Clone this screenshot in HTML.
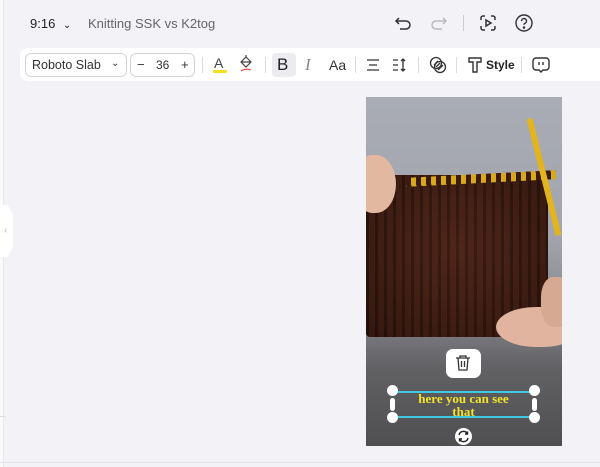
<!DOCTYPE html>
<html><head><meta charset="utf-8"><style>
*{margin:0;padding:0;box-sizing:border-box}
body{width:600px;height:467px;background:#f2f2f7;font-family:"Liberation Sans",sans-serif;position:relative;overflow:hidden;color:#333}
.abs{position:absolute}
.tb{left:20px;top:48px;width:580px;height:33px;background:#fff;border-radius:8px 0 0 8px}
.box{border:1px solid #d4d4d8;border-radius:6px;background:#fff;height:24px;top:53px}
.sep{width:1px;height:16px;background:#ddd;top:57px}
.t{font-size:13px}
</style></head><body>
<div class="abs" style="left:0;top:0;width:4px;height:467px;background:#fafafa;border-right:1px solid #e8e8ec"></div>
<div class="abs" style="left:0;top:205px;width:13px;height:52px;background:#fff;border-radius:0 4px 4px 0;clip-path:polygon(0 0,60% 0,100% 20%,100% 80%,60% 100%,0 100%)"></div>
<div class="abs" style="left:4px;top:225px;font-size:10px;color:#bbb">‹</div>
<div class="abs" style="left:0;top:416px;width:6px;height:1px;background:#ddd"></div>
<div class="abs" style="left:0;top:462px;width:600px;height:1px;background:#e4e4e8"></div>

<div class="abs t" style="left:30px;top:16px;color:#222">9:16 <span style="font-size:10px;margin-left:4px">⌄</span></div>
<div class="abs t" style="left:88px;top:16px;color:#666">Knitting SSK vs K2tog</div>
<svg class="abs" style="left:394px;top:14px" width="20" height="18" viewBox="0 0 20 18" fill="none" stroke="#333" stroke-width="1.5"><path d="M5 4 L2 7 L5 10 M2 7 H12 a4 4 0 0 1 0 8 H6"/></svg>
<svg class="abs" style="left:428px;top:14px" width="20" height="18" viewBox="0 0 20 18" fill="none" stroke="#bbb" stroke-width="1.5"><path d="M15 4 L18 7 L15 10 M18 7 H8 a4 4 0 0 0 0 8 H14"/></svg>
<div class="abs" style="left:463px;top:15px;width:1px;height:16px;background:#ccc"></div>
<svg class="abs" style="left:479px;top:14px" width="18" height="18" viewBox="0 0 18 18" fill="none" stroke="#333" stroke-width="1.5"><path d="M2 6V4a2 2 0 0 1 2-2h2M12 2h2a2 2 0 0 1 2 2v2M16 12v2a2 2 0 0 1-2 2h-2M6 16H4a2 2 0 0 1-2-2v-2"/><path d="M7 6 L12 9 L7 12Z"/></svg>
<svg class="abs" style="left:514px;top:13px" width="20" height="20" viewBox="0 0 20 20" fill="none" stroke="#333" stroke-width="1.4"><circle cx="10" cy="10" r="8"/><path d="M7.5 8a2.5 2.5 0 1 1 3.5 2.3c-.7.3-1 .8-1 1.5"/><circle cx="10" cy="14.5" r=".6" fill="#333"/></svg>

<div class="abs tb"></div>
<div class="abs box" style="left:25px;width:102px"></div>
<div class="abs t" style="left:32px;top:58px;font-size:12.5px;color:#333">Roboto Slab</div>
<div class="abs" style="left:111px;top:58px;font-size:10px">⌄</div>
<div class="abs box" style="left:130px;width:65px"></div>
<div class="abs t" style="left:137px;top:57px">−</div>
<div class="abs t" style="left:156px;top:58px;font-size:12px">36</div>
<div class="abs t" style="left:181px;top:57px">+</div>
<div class="abs sep" style="left:202px"></div>
<div class="abs" style="left:214px;top:55px;font-size:14px;color:#444">A</div>
<div class="abs" style="left:213px;top:70px;width:14px;height:3px;background:#f5e020;border-radius:1px"></div>
<svg class="abs" style="left:239px;top:55px" width="14" height="20" viewBox="0 0 14 20" fill="none" stroke="#444" stroke-width="1.2"><path d="M7 2 L12 7 L7 12 L2 7Z M2 7H12 M7 0V3"/><path d="M2 16 Q7 13 12 15" stroke="#e44" /></svg>
<div class="abs sep" style="left:265px"></div>
<div class="abs" style="left:272px;top:53px;width:24px;height:24px;background:#ececf0;border-radius:4px"></div>
<div class="abs" style="left:277px;top:55px;font-size:17px;color:#222">B</div>
<div class="abs" style="left:305px;top:55px;font-size:17px;color:#888;font-style:italic;font-family:'Liberation Serif',serif">I</div>
<div class="abs" style="left:329px;top:57px;font-size:14px;color:#333">Aa</div>
<div class="abs sep" style="left:355px"></div>
<svg class="abs" style="left:366px;top:58px" width="14" height="14" viewBox="0 0 14 14" stroke="#333" stroke-width="1.3"><path d="M1 2H13M3 7H11M1 12H13"/></svg>
<svg class="abs" style="left:392px;top:57px" width="16" height="16" viewBox="0 0 16 16" stroke="#333" stroke-width="1.3" fill="none"><path d="M1 3H6M1 8H6M1 13H6M11 2V14M9 4L11 2L13 4M9 12L11 14L13 12"/></svg>
<div class="abs sep" style="left:418px"></div>
<svg class="abs" style="left:429px;top:56px" width="18" height="18" viewBox="0 0 18 18" stroke="#333" stroke-width="1.3" fill="none"><circle cx="7" cy="7" r="5.5"/><circle cx="11" cy="11" r="5.5"/><path d="M7 11L11 7M9 14L14 9M5 9L9 5"/></svg>
<div class="abs sep" style="left:456px"></div>
<svg class="abs" style="left:468px;top:57px" width="14" height="16" viewBox="0 0 14 16" stroke="#333" stroke-width="1.4" fill="none"><path d="M1 1H13V5H9V15H5V5H1Z"/></svg>
<div class="abs" style="left:486px;top:58px;font-size:12px;font-weight:bold;color:#222">Style</div>
<div class="abs sep" style="left:521px"></div>
<svg class="abs" style="left:532px;top:56px" width="18" height="18" viewBox="0 0 18 18" stroke="#333" stroke-width="1.4" fill="none"><path d="M4 2H14a3 3 0 0 1 3 3V11a3 3 0 0 1-3 3H11L9 16L7 14H4a3 3 0 0 1-3-3V5a3 3 0 0 1 3-3Z M7 6V9M11 6V9"/></svg>

<!-- video -->
<div class="abs" style="left:366px;top:97px;width:196px;height:349px;overflow:hidden;background:linear-gradient(180deg,#a9acb4 0%,#a2a5ad 40%,#85868c 62%,#616164 78%,#4f4f52 100%)">
  <div class="abs" style="left:0;top:78px;width:182px;height:162px;background:repeating-linear-gradient(90deg,rgba(0,0,0,.18) 0 3px,rgba(120,60,40,.12) 3px 9px),radial-gradient(ellipse at 50% 45%,#4a2318,#34180f 70%,#28120c);border-radius:6px 10px 4px 4px"></div>
  <div class="abs" style="left:40px;top:77px;width:150px;height:9px;background:repeating-linear-gradient(90deg,#3a1a10 0 5px,#d8a91a 5px 10px);transform:rotate(-3deg)"></div>
  <div class="abs" style="left:175px;top:20px;width:6px;height:120px;background:#e2b41d;transform:rotate(-14deg)"></div>
  <div class="abs" style="left:-10px;top:58px;width:40px;height:58px;background:#e3b8a0;border-radius:40% 50% 50% 40%"></div>
  <div class="abs" style="left:130px;top:210px;width:80px;height:40px;background:#e0b49e;border-radius:50% 40% 40% 50%"></div>
  <div class="abs" style="left:175px;top:180px;width:30px;height:50px;background:#d6aa92;border-radius:40%"></div>
</div>

<div class="abs" style="left:446px;top:349px;width:35px;height:29px;background:#fff;border-radius:7px"></div>
<svg class="abs" style="left:455px;top:355px" width="16" height="17" viewBox="0 0 16 17" stroke="#333" stroke-width="1.3" fill="none"><path d="M1 3H15M5 3V1H11V3M3 3L4 15H12L13 3M6.5 6V12M9.5 6V12"/></svg>
<div class="abs" style="left:392px;top:391px;width:143px;height:27px;border-top:2px solid #3ec9e0;border-bottom:2px solid #3ec9e0"></div>
<div class="abs" style="left:392px;top:392px;width:143px;text-align:center;color:#f2e22a;font-family:'Liberation Serif',serif;font-weight:bold;font-size:13px;line-height:13px">here you can see<br>that</div>
<div class="abs" style="left:387px;top:385px;width:11px;height:11px;border-radius:50%;background:#fff"></div>
<div class="abs" style="left:529px;top:385px;width:11px;height:11px;border-radius:50%;background:#fff"></div>
<div class="abs" style="left:387px;top:412px;width:11px;height:11px;border-radius:50%;background:#fff"></div>
<div class="abs" style="left:529px;top:412px;width:11px;height:11px;border-radius:50%;background:#fff"></div>
<div class="abs" style="left:390px;top:398px;width:5px;height:13px;border-radius:3px;background:#fff"></div>
<div class="abs" style="left:532px;top:398px;width:5px;height:13px;border-radius:3px;background:#fff"></div>
<div class="abs" style="left:455px;top:428px;width:17px;height:17px;border-radius:50%;background:#fff"></div>
<svg class="abs" style="left:457px;top:430px" width="13" height="13" viewBox="0 0 13 13" stroke="#222" stroke-width="1.4" fill="none"><path d="M2 5a4.5 4.5 0 0 1 8.5-1M11 8a4.5 4.5 0 0 1-8.5 1M10.5 1.5V4H8M2.5 11.5V9H5"/></svg>
</body></html>
